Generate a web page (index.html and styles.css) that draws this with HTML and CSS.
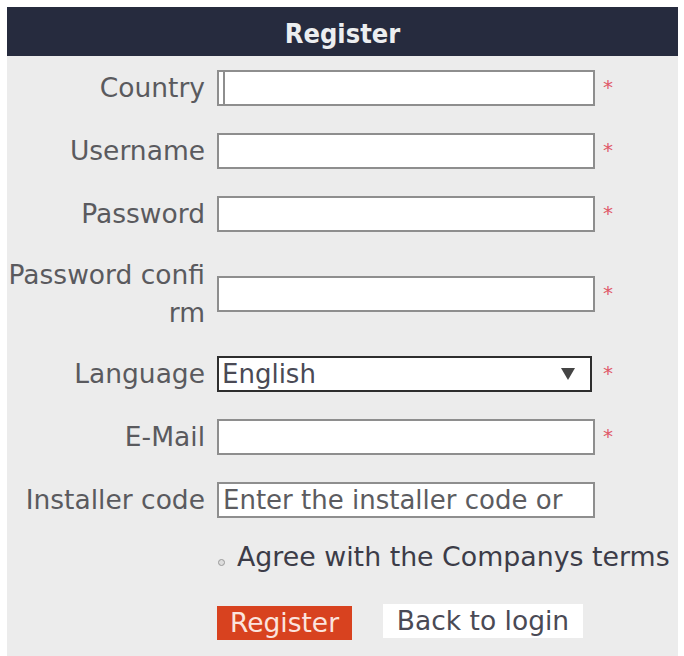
FILE: index.html
```html
<!DOCTYPE html>
<html lang="en">
<head>
<meta charset="utf-8">
<title>Register</title>
<link rel="stylesheet" href="styles.css">
</head>
<body>
<div class="page">
  <div class="header">Register</div>
  <form class="form">
    <label class="label" for="country">Country</label>
    <input class="field caret" id="country" type="text">
    <span class="req">*</span>

    <label class="label" for="username">Username</label>
    <input class="field" id="username" type="text">
    <span class="req">*</span>

    <label class="label" for="password">Password</label>
    <input class="field" id="password" type="password">
    <span class="req">*</span>

    <label class="label label-tall" for="confirm">Password confirm</label>
    <input class="field" id="confirm" type="password">
    <span class="req">*</span>

    <label class="label" for="language">Language</label>
    <div class="select-wrap">
      <select class="select" id="language"><option>English</option></select>
      <svg class="arrow" width="14" height="12" viewBox="0 0 14 12"><path d="M0 0H14L7 12Z" fill="#444"/></svg>
    </div>
    <span class="req">*</span>

    <label class="label" for="email">E-Mail</label>
    <input class="field" id="email" type="text">
    <span class="req">*</span>

    <label class="label" for="installer">Installer code</label>
    <input class="field" id="installer" type="text" placeholder="Enter the installer code or">
    <span></span>

    <span></span>
    <label class="agree"><span class="radio"></span>Agree with the Companys terms</label>

    <span></span>
    <div class="buttons">
      <button type="button" class="btn btn-primary">Register</button>
      <button type="button" class="btn btn-plain">Back to login</button>
    </div>
    <span></span>
  </form>
</div>
</body>
</html>
```
FILE: styles.css
```css
html, body {
  margin: 0;
  padding: 0;
  background: #ffffff;
}
body {
  font-family: "DejaVu Sans", Verdana, sans-serif;
  font-size: 27px;
  color: #555;
}
.page {
  margin: 7px 6px 0 7px;
  background: #ececec;
  min-height: 649px;
}
.header {
  box-sizing: border-box;
  height: 49px;
  line-height: 49px;
  padding-top: 2px;
  background: #262b3e;
  color: #eceef0;
  text-align: center;
  font-family: "DejaVu Sans Condensed", "DejaVu Sans", sans-serif;
  font-weight: bold;
  font-size: 27px;
}
.form {
  display: grid;
  grid-template-columns: 198px 378px 1fr;
  column-gap: 12px;
  row-gap: 25px;
  align-items: center;
  padding-top: 13px;
}
.label {
  text-align: right;
  line-height: 38px;
  word-break: break-all;
  color: #5a5a5e;
  font-size: 26.5px;
}
.label-tall {
  margin: -2px 0 -2px;
}
.field {
  box-sizing: border-box;
  width: 378px;
  height: 36px;
  border: 2px solid #8e8e8e;
  background: #fff;
  margin: 0;
  padding: 0 4px;
  font-family: "DejaVu Sans", Verdana, sans-serif;
  font-size: 26px;
  color: #444;
  outline: none;
}
.field::placeholder {
  color: #5c5c60;
}
.caret {
  box-shadow: inset 4px 0 0 #fff, inset 6px 0 0 #8e8e8e;
}
.select-wrap {
  position: relative;
  width: 375px;
  height: 36px;
}
.select {
  appearance: none;
  -webkit-appearance: none;
  box-sizing: border-box;
  width: 375px;
  height: 36px;
  border: 2px solid #2e2e2e;
  border-radius: 0;
  background: #fff;
  margin: 0;
  padding: 0 3px;
  font-family: "DejaVu Sans", Verdana, sans-serif;
  font-size: 26px;
  color: #4a4a55;
  outline: none;
}
.arrow {
  position: absolute;
  right: 17px;
  top: 12px;
  pointer-events: none;
}
.req {
  color: #e05868;
  font-size: 20px;
  line-height: 20px;
  align-self: center;
  margin: -3px 0 0 -4px;
}
.agree {
  grid-column: 2 / 4;
  display: flex;
  align-items: center;
  color: #3c3c48;
  font-size: 26.8px;
  line-height: 38px;
  white-space: nowrap;
  margin-top: -6px;
}
.radio {
  width: 5px;
  height: 5px;
  border: 1px solid #999;
  border-radius: 50%;
  margin: 10px 12px 0 1px;
  background: #ddd;
}
.buttons {
  display: flex;
  gap: 31px;
  align-items: center;
  margin-top: 5px;
}
.btn {
  font-family: "DejaVu Sans", Verdana, sans-serif;
  font-size: 26.5px;
  height: 34px;
  line-height: 34px;
  padding: 0 6px;
  border: none;
  border-radius: 0;
  margin: 0;
  white-space: nowrap;
}
.btn-primary {
  background: #d8421f;
  color: #fbe4de;
  width: 135px;
}
.btn-plain {
  background: #fff;
  color: #4a4a55;
  width: 200px;
  margin-top: -4px;
}
```
